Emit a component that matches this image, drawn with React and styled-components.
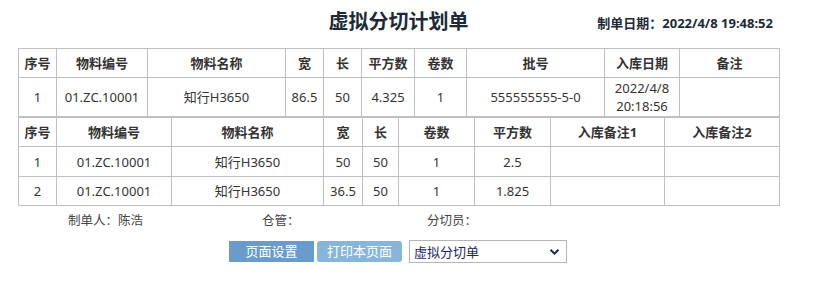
import React from "react";
import styled, { createGlobalStyle } from "styled-components";

const Global = createGlobalStyle`
  html, body { margin: 0; padding: 0; background: #fff; }
  body { font-family: "Noto Sans", "Noto Sans CJK SC", sans-serif; color: #333; }
`;

const Page = styled.div`
  width: 761px;
  padding-left: 18px;
`;

const Header = styled.div`
  position: relative;
  height: 48px;
  display: flex;
  align-items: center;
  justify-content: center;
  padding-bottom: 4px;
  box-sizing: border-box;
`;

const Title = styled.h1`
  margin: 0;
  font-size: 20px;
  font-weight: 700;
  color: #1c2a38;
  line-height: 1;
`;

const MadeDate = styled.div`
  position: absolute;
  right: 6px;
  top: 13px;
  font-size: 13px;
  font-weight: 700;
  color: #1c2a38;
`;

const Table = styled.table`
  width: 761px;
  border-collapse: collapse;
  table-layout: fixed;
  font-size: 13px;
  color: #333;
  border: 1px solid #c9c9c9;
  ${(p) => (p.$joined ? "border-top: none;" : "")}
`;

const Th = styled.th`
  border: 1px solid #c0c0c0;
  height: ${(p) => p.$h || 28}px;
  padding: 0;
  font-weight: 700;
  text-align: center;
  color: #333;
  line-height: 16px;
`;

const Td = styled.td`
  border: 1px solid #c0c0c0;
  height: ${(p) => p.$h || 28}px;
  padding: 0;
  text-align: center;
  line-height: 18px;
`;

const Footer = styled.div`
  display: flex;
  padding: 7px 0 0 50px;
  height: 22px;
  font-size: 12.5px;
  color: #444;
  line-height: 16px;
`;

const Sign = styled.div`
  width: ${(p) => p.$w}px;
`;

const Controls = styled.div`
  display: flex;
  justify-content: center;
  align-items: center;
  padding-top: 5px;
  width: 760px;
`;

const Btn = styled.button`
  width: 85px;
  height: 21px;
  border: none;
  border-radius: ${(p) => (p.$light ? 3 : 0)}px;
  background: ${(p) => (p.$light ? "#86b6da" : "#6a9bcd")};
  color: #fff;
  font-family: inherit;
  font-size: 13px;
  line-height: 21px;
  padding: 0;
  margin-right: ${(p) => p.$mr}px;
`;

const Select = styled.div`
  width: 146px;
  height: 21px;
  border: 1px solid #b5b5b5;
  display: flex;
  align-items: center;
  justify-content: space-between;
  padding: 0 6px 0 4px;
  box-sizing: content-box;
  margin-left: 2px;
  font-size: 13px;
  color: #1d1f6a;
`;

const t1Cols = [38, 91, 138, 38, 38, 53, 52, 138, 75, 100];
const t2Cols = [38, 115, 152, 39, 36, 76, 76, 114, 115];

export default function App() {
  return (
    <Page>
      <Global />
      <Header>
        <Title>虚拟分切计划单</Title>
        <MadeDate>制单日期：2022/4/8 19:48:52</MadeDate>
      </Header>
      <Table>
        <colgroup>
          {t1Cols.map((w, i) => (
            <col key={i} style={{ width: w }} />
          ))}
        </colgroup>
        <tbody>
          <tr>
            {["序号", "物料编号", "物料名称", "宽", "长", "平方数", "卷数", "批号", "入库日期", "备注"].map((h) => (
              <Th key={h}>{h}</Th>
            ))}
          </tr>
          <tr>
            <Td $h={38}>1</Td>
            <Td $h={38}>01.ZC.10001</Td>
            <Td $h={38}>知行H3650</Td>
            <Td $h={38}>86.5</Td>
            <Td $h={38}>50</Td>
            <Td $h={38}>4.325</Td>
            <Td $h={38}>1</Td>
            <Td $h={38}>555555555-5-0</Td>
            <Td $h={38}>
              2022/4/8
              <br />
              20:18:56
            </Td>
            <Td $h={38}></Td>
          </tr>
        </tbody>
      </Table>
      <Table $joined>
        <colgroup>
          {t2Cols.map((w, i) => (
            <col key={i} style={{ width: w }} />
          ))}
        </colgroup>
        <tbody>
          <tr>
            {["序号", "物料编号", "物料名称", "宽", "长", "卷数", "平方数", "入库备注1", "入库备注2"].map((h) => (
              <Th key={h}>{h}</Th>
            ))}
          </tr>
          <tr>
            <Td $h={29}>1</Td>
            <Td $h={29}>01.ZC.10001</Td>
            <Td $h={29}>知行H3650</Td>
            <Td $h={29}>50</Td>
            <Td $h={29}>50</Td>
            <Td $h={29}>1</Td>
            <Td $h={29}>2.5</Td>
            <Td $h={29}></Td>
            <Td $h={29}></Td>
          </tr>
          <tr>
            <Td>2</Td>
            <Td>01.ZC.10001</Td>
            <Td>知行H3650</Td>
            <Td>36.5</Td>
            <Td>50</Td>
            <Td>1</Td>
            <Td>1.825</Td>
            <Td></Td>
            <Td></Td>
          </tr>
        </tbody>
      </Table>
      <Footer>
        <Sign $w={194}>制单人：陈浩</Sign>
        <Sign $w={165}>仓管：</Sign>
        <Sign $w={100}>分切员：</Sign>
      </Footer>
      <Controls>
        <Btn $mr={3}>页面设置</Btn>
        <Btn $light $mr={5}>打印本页面</Btn>
        <Select>
          <span>虚拟分切单</span>
          <svg width="11" height="8" viewBox="0 0 11 8">
            <path d="M1.5 1.8 L5.5 5.6 L9.5 1.8" fill="none" stroke="#1d1f6a" strokeWidth="2" />
          </svg>
        </Select>
      </Controls>
    </Page>
  );
}
